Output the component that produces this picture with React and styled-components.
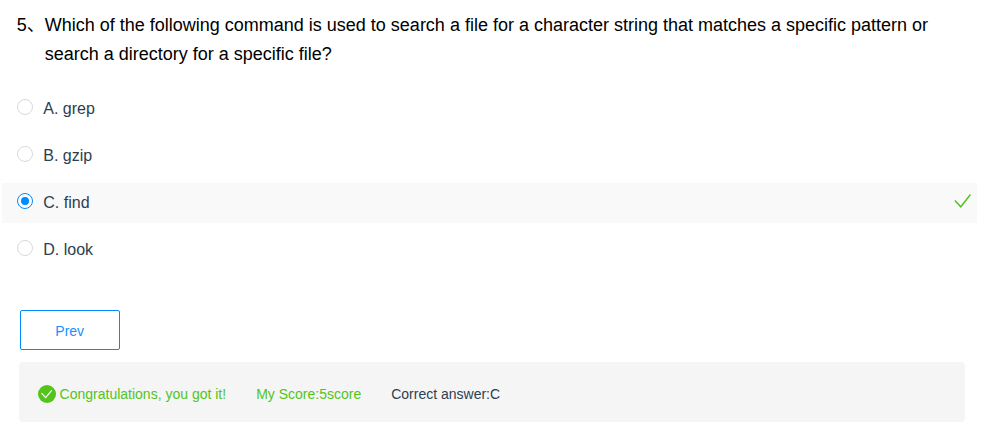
import React from "react";
import styled, { createGlobalStyle } from "styled-components";

const Global = createGlobalStyle`
  * { box-sizing: border-box; }
  body { margin: 0; background: #fff; overflow: hidden; font-family: "Liberation Sans", "Noto Sans CJK SC", sans-serif; }
`;
const Page = styled.main`
  width: 977px;
  height: 425px;
  padding: 11px 0 0 2px;
  display: flex;
  flex-direction: column;
`;
const Question = styled.h1`
  margin: 0 0 20px;
  padding-left: 14.7px;
  display: flex;
  font-size: 18px;
  font-weight: 400;
  line-height: 29px;
  color: #000;
`;
const Number = styled.span`
  width: 28px;
  flex: none;
  white-space: nowrap;
`;
const QuestionText = styled.span`
  width: 900px;
`;
const Options = styled.div`
  display: flex;
  flex-direction: column;
  gap: 7px;
`;
const Option = styled.label`
  height: 40px;
  display: flex;
  align-items: center;
  padding: 0 6px 4px 15px;
  background: ${(p) => (p.$selected ? "#f9f9f9" : "transparent")};
`;
const Radio = styled.span`
  width: 16px;
  height: 16px;
  flex: none;
  display: grid;
  place-items: center;
  border: 1px solid ${(p) => (p.$selected ? "#008cff" : "#d9d9d9")};
  border-radius: 50%;
  background: #fff;
  &::after {
    content: "";
    width: 8px;
    height: 8px;
    border-radius: 50%;
    background: ${(p) => (p.$selected ? "#008cff" : "transparent")};
  }
`;
const OptionText = styled.span`
  flex: 1;
  padding: 3px 0 0 10.3px;
  font-size: 16px;
  line-height: 24px;
  color: #2c3e50;
`;
const Prev = styled.button`
  width: 100px;
  height: 40px;
  margin: 40px 0 12px 18px;
  padding: 2px 0.6px 0 0;
  border: 1px solid #008cff;
  border-radius: 2px;
  background: #fff;
  color: #1890ff;
  font: 14px "Liberation Sans", sans-serif;
`;
const Result = styled.section`
  width: 946px;
  height: 60px;
  margin-left: 17px;
  padding: 4px 19px 0;
  display: flex;
  align-items: center;
  gap: 30px;
  border-radius: 4px;
  background: #f5f5f5;
  font-size: 14px;
`;
const Status = styled.span`
  display: flex;
  align-items: center;
  gap: 3.6px;
  color: ${(p) => (p.$success ? "#52c41a" : "#2c3e50")};
`;

const Check = () => (
  <svg width="17" height="14" viewBox="0 0 17 14" fill="none">
    <path d="M.9 6.5 6.8 12.8 16.5.5" stroke="#52c41a" strokeWidth="1.5" />
  </svg>
);
const CheckCircle = () => (
  <svg width="18" height="18" viewBox="0 0 18 18" fill="none">
    <circle cx="9" cy="9" r="9" fill="#52c41a" />
    <path d="m3.5 8.2 4.2 4.4 6.2-7.5" stroke="#fff" strokeWidth="1.2" />
  </svg>
);

const options = ["A. grep", "B. gzip", "C. find", "D. look"];

export default function App() {
  return (
    <>
      <Global />
      <Page>
        <Question>
          <Number>5、</Number>
          <QuestionText>
            Which of the following command is used to search a file for a character string that matches a specific pattern or search a directory for a specific file?
          </QuestionText>
        </Question>
        <Options>
          {options.map((text, i) => (
            <Option key={text} $selected={i === 2}>
              <Radio $selected={i === 2} />
              <OptionText>{text}</OptionText>
              {i === 2 && <Check />}
            </Option>
          ))}
        </Options>
        <Prev>Prev</Prev>
        <Result>
          <Status $success><CheckCircle />Congratulations, you got it!</Status>
          <Status $success>My Score:5score</Status>
          <Status>Correct answer:C</Status>
        </Result>
      </Page>
    </>
  );
}
